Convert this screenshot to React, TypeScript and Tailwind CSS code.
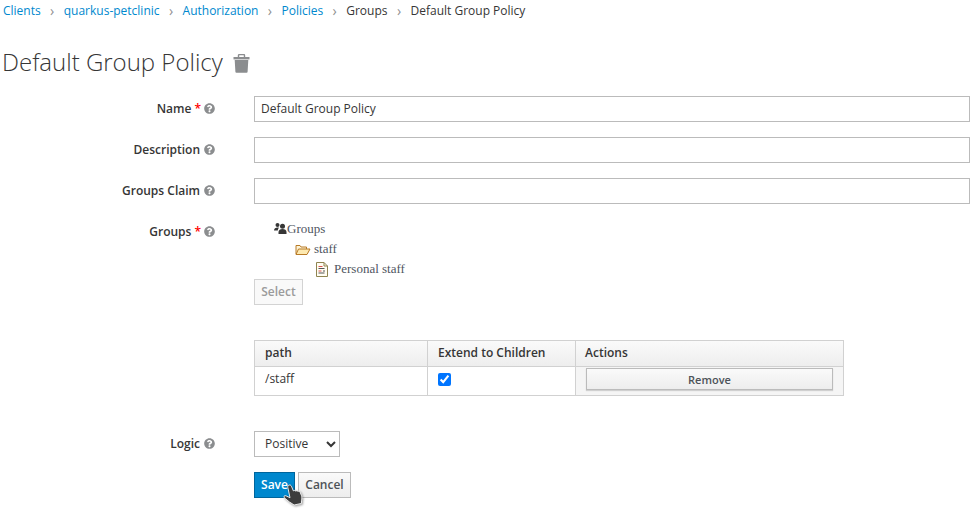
import React from "react";
import { FaQuestionCircle } from "react-icons/fa";

const Help = () => <FaQuestionCircle className="ml-[4px] w-[11px] h-[11px] text-[#8b8d8f] inline-block" />;
const Star = () => <span className="text-[#ff0000] ml-[3px] mr-[-1px]">*</span>;

function Label({ text, req }: { text: string; req?: boolean }) {
  return (
    <div className="w-[254px] shrink-0 pr-[39px] pb-[2px] flex justify-end items-center font-semibold text-[12px] text-[#363636] leading-[17px]">
      {text}
      {req && <Star />}
      <Help />
    </div>
  );
}

const Sep = () => <span className="inline-block w-[23px] text-center text-[#8f8f8f] text-[14px] leading-[18px]">›</span>;

function Trash() {
  return (
    <svg width="17" height="19" viewBox="0 0 17 19" className="ml-[10px] mt-[2px] block text-[#8b8d8f]">
      <path d="M5.500 3V1.500a1 1 0 0 1 1-1h4a1 1 0 0 1 1 1V3" fill="none" stroke="currentColor" strokeWidth="1.400" />
      <rect x="0.500" y="3" width="16" height="2.400" fill="currentColor" />
      <path d="M1.700 6h13.600l-.7 11.700a1 1 0 0 1-1 1H3.400a1 1 0 0 1-1-1Z" fill="currentColor" />
    </svg>
  );
}

function Users() {
  return (
    <svg width="13" height="11" viewBox="0 0 13 11" className="block -mt-[2px] text-[#363636]">
      <circle cx="3.500" cy="2" r="2" fill="currentColor" />
      <path d="M0 7.500C0 5.500 1.500 4.500 3.500 4.500c.6 0 1.100.1 1.500.3C4.200 5.500 3.800 6.500 3.800 7.500Z" fill="currentColor" />
      <circle cx="8.500" cy="3.300" r="2.500" fill="currentColor" />
      <path d="M4.500 11V9c0-2 1.700-3 4-3s4 1 4 3v2Z" fill="currentColor" />
    </svg>
  );
}

function Folder() {
  return (
    <svg width="16" height="13" viewBox="0 0 16 13" className="block">
      <path d="M1 11V2.500h4l1 1.500h5.500V6" fill="#fdf3d6" stroke="#b87a26" strokeWidth="1" />
      <path d="M1 11.500 3.500 6H15l-3 5.500Z" fill="#fde9b0" stroke="#b87a26" strokeWidth="1" />
    </svg>
  );
}

function Doc() {
  return (
    <svg width="12" height="15" viewBox="0 0 12 15" className="block">
      <path d="M.5.500H8L11.500 4v10.500H.5Z" fill="#fffdf2" stroke="#8f8450" />
      <path d="M8 .5V4h3.500" fill="none" stroke="#8f8450" />
      <path d="M2.500 4.500h4M2.500 9h3" stroke="#d9534f" />
      <path d="M2.500 6.500h6M7 9h2M2.500 11h6" stroke="#555" />
    </svg>
  );
}

function Cursor() {
  return (
    <svg width="21" height="23" viewBox="0 0 21 23" className="absolute left-[283px] top-[483px] drop-shadow-[1px_1px_1px_rgba(0,0,0,0.4)]">
      <g transform="rotate(-12 10 12)">
        <path d="M8.500 1.500c1 0 1.600.7 1.800 1.600L11.200 8c1-.5 2 0 2.200.8.800-.5 1.800-.2 2.100.7.800-.3 1.700.1 2 1l.7 4c.2 1.500-.2 3-1 4.500L16.500 22H9L5 18 1 13c-.8-1.200.3-2.500 1.800-1.800L6.500 14V3.500C6.500 2.300 7.400 1.500 8.500 1.500Z" fill="#3d3d3d" stroke="#ffffff" strokeWidth="0.800" />
      </g>
    </svg>
  );
}

const inputCls = "flex-1 h-[26px] border border-[#bbbbbb] bg-white px-[6px] pb-[2px] text-[12px] text-[#363636] outline-none";

export default function App() {
  return (
    <div className="relative w-[976px] h-[512px] bg-white overflow-hidden font-['Open_Sans',sans-serif] text-[12px] text-[#363636]">
      <nav className="flex items-center h-[22px] pl-[3px] leading-[22px]">
        <a className="text-[#0088ce]">Clients</a><Sep />
        <a className="text-[#0088ce]">quarkus-petclinic</a><Sep />
        <a className="text-[#0088ce]">Authorization</a><Sep />
        <a className="text-[#0088ce]">Policies</a><Sep />
        <span>Groups</span><Sep />
        <span>Default Group Policy</span>
      </nav>

      <h1 className="flex items-center pl-[2px] mt-[25px] h-[30px] text-[24px] font-light leading-[30px] text-[#363636]">
        Default Group Policy
        <Trash />
      </h1>

      <div className="flex flex-col pr-[6px] mt-[19px] gap-[15px]">
        <div className="flex">
          <Label text="Name" req />
          <input className={inputCls} defaultValue="Default Group Policy" />
        </div>
        <div className="flex">
          <Label text="Description" />
          <input className={inputCls} />
        </div>
        <div className="flex">
          <Label text="Groups Claim" />
          <input className={inputCls} />
        </div>
      </div>

      <div className="flex mt-[15px]">
        <div className="w-[254px] shrink-0 pr-[39px] flex justify-end items-start font-semibold leading-[17px] pt-[4px] h-[21px]">
          <span className="flex items-center">Groups<Star /><Help /></span>
        </div>
        <div>
          <div className="pl-[20px] font-['Liberation_Serif',serif] text-[13px] text-[#4f5561] leading-[20px]">
            <div className="flex items-center h-[20px]">
              <Users />
              Groups
            </div>
            <div className="flex items-center h-[20px] pl-[21px] gap-[3px]"><Folder />staff</div>
            <div className="flex items-center h-[20px] pl-[42px] gap-[6px]"><Doc />Personal staff</div>
          </div>
          <button className="block w-[49px] h-[26px] border border-[#d3d3d3] bg-[#f9f9f9] font-semibold text-[#9b9b9b]">Select</button>
        </div>
      </div>

      <div className="ml-[254px] mt-[35px] w-[590px]">
        <table className="w-full border-collapse table-fixed text-[12px]">
          <colgroup>
            <col className="w-[173px]" />
            <col className="w-[148px]" />
            <col />
          </colgroup>
          <thead>
            <tr className="h-[26px] bg-gradient-to-b from-[#fafafa] to-[#ededed] font-semibold">
              <th className="border border-[#d1d1d1] px-[10px] pb-[2px] text-left font-semibold">path</th>
              <th className="border border-[#d1d1d1] px-[10px] pb-[2px] text-left font-semibold">Extend to Children</th>
              <th className="border border-[#d1d1d1] pl-[9px] pr-[10px] pb-[2px] text-left font-semibold">Actions</th>
            </tr>
          </thead>
          <tbody>
            <tr className="h-[29px]">
              <td className="border border-[#d1d1d1] px-[10px] pb-[4px]">/staff</td>
              <td className="border border-[#d1d1d1] px-[10px] pb-[4px]">
                <input type="checkbox" defaultChecked className="block w-[13px] h-[13px] accent-[#0075ff]" />
              </td>
              <td className="border border-[#d1d1d1] bg-[#f5f5f5] px-[10px] pb-[4px]">
                <button className="block w-[247px] h-[22px] border border-[#bbbbbb] bg-gradient-to-b from-[#fafafa] to-[#ededed] shadow-[0_1px_1px_rgba(0,0,0,0.15)] text-[11px] font-semibold text-[#4d5258] leading-none">Remove</button>
              </td>
            </tr>
          </tbody>
        </table>
      </div>

      <div className="flex mt-[35px]">
        <Label text="Logic" />
        <select defaultValue="Positive" className="w-[86px] h-[26px] border border-[#bbbbbb] bg-white pl-[6px] pb-[2px] text-[12px] text-[#363636]">
          <option>Positive</option>
          <option>Negative</option>
        </select>
      </div>

      <div className="flex ml-[254px] mt-[15px] gap-[3px]">
        <button className="w-[41px] h-[26px] border border-[#00659c] bg-[#0088ce] text-white font-semibold">Save</button>
        <button className="w-[53px] h-[26px] border border-[#bbbbbb] bg-gradient-to-b from-[#fafafa] to-[#ededed] font-semibold text-[#4d5258]">Cancel</button>
      </div>

      <Cursor />
    </div>
  );
}
